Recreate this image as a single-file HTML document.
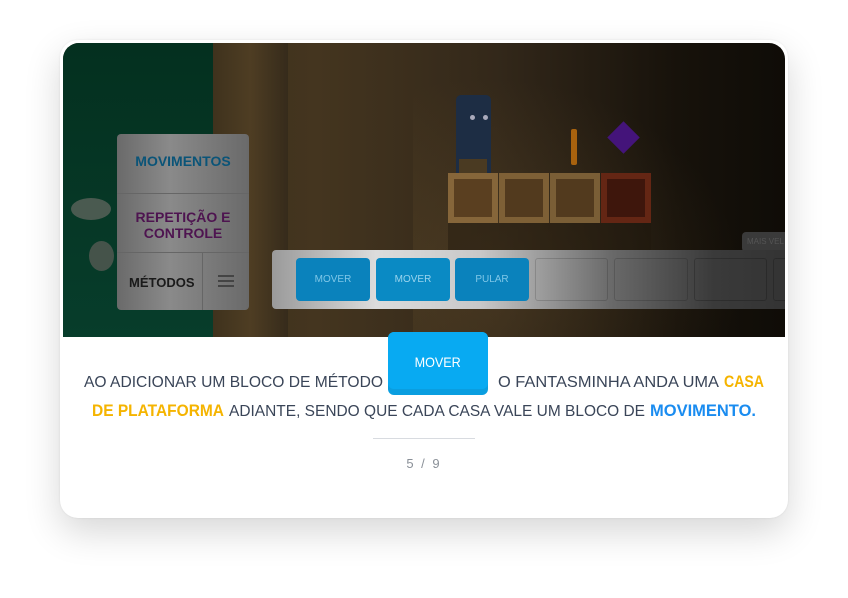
<!DOCTYPE html>
<html><head><meta charset="utf-8"><style>
*{margin:0;padding:0;box-sizing:border-box}
body{width:848px;height:598px;background:#fff;position:relative;overflow:hidden;font-family:"Liberation Sans",sans-serif}
.card{position:absolute;left:60px;top:40px;width:728px;height:478px;background:#fff;border-radius:18px;box-shadow:0 14px 36px rgba(0,0,0,.16),0 0 2px rgba(0,0,0,.08)}
.scene{position:absolute;left:63px;top:43px;width:722px;height:294px;border-radius:16px 16px 0 0;overflow:hidden;background:linear-gradient(90deg,#33291a 0%,#44351f 35%,#33281a 60%,#17120b 85%,#0f0c07 100%)}
.abs{position:absolute;white-space:nowrap}
</style></head><body>
<div class="card"></div>
<div class="scene">
  <div class="abs" style="left:0;top:0;width:150px;height:294px;background:linear-gradient(180deg,#04301f,#073d2b)"></div>
  <div class="abs" style="left:150px;top:0;width:75px;height:294px;background:linear-gradient(90deg,#3f321d,#4e3d23 50%,#362b1b)"></div>
  <div class="abs" style="left:350px;top:0;width:372px;height:294px;background:radial-gradient(ellipse at 20% 80%,rgba(110,85,45,.3),rgba(0,0,0,0) 60%)"></div>
  <div class="abs" style="left:8px;top:155px;width:40px;height:22px;border-radius:50%;background:#4a5a50"></div>
  <div class="abs" style="left:26px;top:198px;width:25px;height:30px;border-radius:50%;background:#45534a"></div>
  <!-- menu -->
  <div class="abs" style="left:54px;top:91px;width:132px;height:176px;border-radius:4px;background:linear-gradient(90deg,#6a6a6a,#8a8a8a 40%,#6a6a6a)">
    <div class="abs" style="left:0;top:19px;width:132px;text-align:center;font-weight:bold;font-size:14px;color:#0a5478">MOVIMENTOS</div>
    <div class="abs" style="left:0;top:59px;width:132px;height:1px;background:#666"></div>
    <div class="abs" style="left:0;top:75px;width:132px;text-align:center;font-weight:bold;font-size:14px;line-height:16px;color:#4e1450">REPETIÇÃO E<br>CONTROLE</div>
    <div class="abs" style="left:0;top:118px;width:132px;height:1px;background:#666"></div>
    <div class="abs" style="left:85px;top:118px;width:1px;height:58px;background:#666"></div>
    <div class="abs" style="left:12px;top:141px;font-weight:bold;font-size:13px;color:#1a1a1a">MÉTODOS</div>
    <div class="abs" style="left:101px;top:141px;width:16px;height:2px;background:#444;box-shadow:0 5px 0 #444,0 10px 0 #444"></div>
  </div>
  <!-- ghost -->
  <div class="abs" style="left:393px;top:52px;width:35px;height:79px;border-radius:5px 5px 0 0;background:#1d2d44"></div>
  <div class="abs" style="left:396px;top:116px;width:28px;height:15px;background:#4a3a22"></div>
  <div class="abs" style="left:407px;top:72px;width:5px;height:5px;border-radius:50%;background:#aab"></div>
  <div class="abs" style="left:420px;top:72px;width:5px;height:5px;border-radius:50%;background:#aab"></div>
  <div class="abs" style="left:508px;top:86px;width:6px;height:36px;background:#a8620e;border-radius:2px"></div>
  <div class="abs" style="left:549px;top:83px;width:23px;height:23px;background:#44147a;transform:rotate(45deg)"></div>
  <!-- crates -->
  <div class="abs" style="left:385px;top:130px;width:50px;height:50px;background:#5a3f20;border:6px solid #86663a"></div>
  <div class="abs" style="left:436px;top:130px;width:50px;height:50px;background:#523a1e;border:6px solid #7e6036"></div>
  <div class="abs" style="left:487px;top:130px;width:50px;height:50px;background:#523a1e;border:6px solid #7a5e36"></div>
  <div class="abs" style="left:538px;top:130px;width:50px;height:50px;background:#3e160c;border:6px solid #642614"></div>
  <div class="abs" style="left:385px;top:180px;width:203px;height:30px;background:rgba(30,22,12,.4)"></div>
  <!-- toolbar -->
  <div class="abs" style="left:679px;top:189px;width:50px;height:20px;border-radius:4px;background:#3a3a3a;color:#555;font-size:8px;padding:5px 5px">MAIS VEL</div>
  <div class="abs" style="left:209px;top:207px;width:520px;height:59px;border-radius:4px;background:linear-gradient(90deg,#9a9a9a 0%,#dcdcdc 20%,#c8c8c8 40%,#6a6a6a 65%,#3a3a3a 85%,#333 100%)"></div>
  <div class="abs" style="left:233px;top:215px;width:74px;height:43px;border-radius:4px;background:#0a82bc;color:#7fc7e8;font-size:10px;text-align:center;line-height:43px">MOVER</div>
  <div class="abs" style="left:313px;top:215px;width:74px;height:43px;border-radius:4px;background:#0a8ac4;color:#9ad4ee;font-size:10px;text-align:center;line-height:43px">MOVER</div>
  <div class="abs" style="left:392px;top:215px;width:74px;height:43px;border-radius:4px;background:#0a82bc;color:#7fc7e8;font-size:10px;text-align:center;line-height:43px">PULAR</div>
  <div class="abs" style="left:472px;top:215px;width:73px;height:43px;border-radius:3px;border:1px solid rgba(0,0,0,.15)"></div>
  <div class="abs" style="left:551px;top:215px;width:74px;height:43px;border-radius:3px;border:1px solid rgba(0,0,0,.15)"></div>
  <div class="abs" style="left:631px;top:215px;width:73px;height:43px;border-radius:3px;border:1px solid rgba(0,0,0,.2)"></div>
  <div class="abs" style="left:710px;top:215px;width:20px;height:43px;border-radius:3px;border:1px solid rgba(0,0,0,.2)"></div>
</div>
<!-- big button -->
<div class="abs" style="left:388px;top:332px;width:100px;height:63px;border-radius:6px;background:#0a9ee0"></div>
<div class="abs" style="left:388px;top:332px;width:100px;height:57px;border-radius:6px;background:#08aaf2;color:#fff;font-size:14px;text-align:center;line-height:60px"><span style="display:inline-block;transform:scaleX(.9)">MOVER</span></div>
<svg class="abs" style="left:0;top:0" width="848" height="598">
  <g font-family="Liberation Sans, sans-serif" font-size="16">
    <text x="84" y="387" fill="#3a4558" textLength="299" lengthAdjust="spacingAndGlyphs">AO ADICIONAR UM BLOCO DE MÉTODO</text>
    <text x="498" y="387" fill="#3a4558" textLength="221" lengthAdjust="spacingAndGlyphs">O FANTASMINHA ANDA UMA</text>
    <text x="724" y="387" fill="#f5b400" font-weight="bold" font-size="17" textLength="40" lengthAdjust="spacingAndGlyphs">CASA</text>
    <text x="92" y="416" fill="#f5b400" font-weight="bold" font-size="17" textLength="132" lengthAdjust="spacingAndGlyphs">DE PLATAFORMA</text>
    <text x="229" y="416" fill="#3a4558" textLength="416" lengthAdjust="spacingAndGlyphs">ADIANTE, SENDO QUE CADA CASA VALE UM BLOCO DE</text>
    <text x="650" y="416" fill="#1a8cf0" font-weight="bold" font-size="17" textLength="106" lengthAdjust="spacingAndGlyphs">MOVIMENTO.</text>
    <text x="424" y="468" fill="#8a9098" font-size="13" text-anchor="middle" letter-spacing="2">5 / 9</text>
  </g>
  <rect x="373" y="438" width="102" height="1" fill="#d8dbe0"/>
</svg>
</body></html>
